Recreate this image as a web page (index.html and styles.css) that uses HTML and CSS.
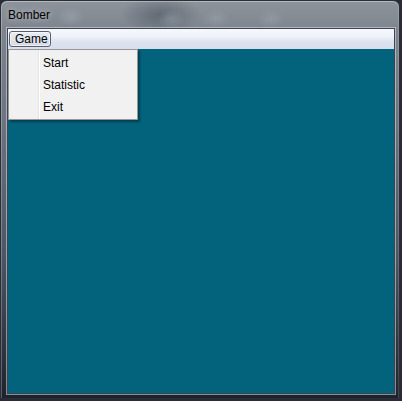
FILE: index.html
```html
<!DOCTYPE html>
<html>
<head>
<meta charset="utf-8">
<link rel="stylesheet" href="styles.css">
</head>
<body>
<div class="window">
  <div class="titlebar">
    <span class="title">Bomber</span>
  </div>
  <div class="client">
    <div class="menubar">
      <div class="menu-item active">Game</div>
    </div>
    <div class="canvas"></div>
    <div class="dropdown">
      <div class="dd-item">Start</div>
      <div class="dd-item">Statistic</div>
      <div class="dd-item">Exit</div>
    </div>
  </div>
</div>
</body>
</html>
```
FILE: styles.css
```css
html, body {
  margin: 0;
  padding: 0;
}
body {
  width: 402px;
  height: 401px;
  background: #2c2a36;
  font-family: "Liberation Sans", Arial, sans-serif;
  font-size: 12px;
  overflow: hidden;
}
.window {
  box-sizing: border-box;
  width: 400px;
  height: 399px;
  border: 1px solid #2a2f37;
  border-radius: 7px 7px 0 0;
  background:
    radial-gradient(ellipse 14px 10px at 70px 16px, rgba(170,180,195,0.35), transparent),
    radial-gradient(ellipse 14px 10px at 170px 18px, rgba(170,180,195,0.35), transparent),
    radial-gradient(ellipse 14px 10px at 215px 18px, rgba(170,180,195,0.3), transparent),
    radial-gradient(ellipse 14px 10px at 270px 18px, rgba(170,180,195,0.3), transparent),
    radial-gradient(ellipse 40px 20px at 160px 14px, rgba(30,40,55,0.35), transparent),
    linear-gradient(to bottom, #8d939b 0px, #7d848d 30px, #6c7480 120px, #4a5462 260px, #2a313c 360px, #1c222b 399px);
  box-shadow: inset 0 1px 0 rgba(255,255,255,0.35), inset 1px 0 0 rgba(255,255,255,0.25), inset -1px 0 0 rgba(255,255,255,0.15);
  display: flex;
  flex-direction: column;
  padding: 0 4px 4px 6px;
}
.titlebar {
  height: 27px;
  flex: none;
  display: flex;
  align-items: flex-start;
  padding-left: 1px;
}
.title {
  margin-top: 7px;
  color: #000;
  line-height: 14px;
  text-shadow: 0 0 6px rgba(255,255,255,0.6);
}
.client {
  position: relative;
  flex: 1;
  display: flex;
  flex-direction: column;
  border: 1px solid #3c4452;
  box-shadow: 0 0 0 1px rgba(220,226,235,0.55);
}
.menubar {
  height: 20px;
  flex: none;
  background: linear-gradient(to bottom, #f6f8fc 0%, #eef1f8 40%, #dde3f0 60%, #d9deee 100%);
  display: flex;
  align-items: flex-start;
  padding: 2px 0 0 1px;
  box-sizing: border-box;
}
.menu-item {
  height: 16px;
  line-height: 15px;
  padding: 0 6px;
  box-sizing: border-box;
  color: #000;
}
.menu-item.active {
  border: 1px solid #585e6c;
  border-radius: 3px;
  background: linear-gradient(to bottom, #e9ecf3 0%, #dfe3ec 50%, #d4d9e5 100%);
  box-shadow: inset 0 0 0 1px rgba(255,255,255,0.6);
  width: 42px;
  padding: 0 0 0 5px;
}
.canvas {
  flex: 1;
  background: #03637c;
}
.dropdown {
  position: absolute;
  left: 0;
  top: 20px;
  width: 130px;
  box-sizing: border-box;
  border: 1px solid #979797;
  background: linear-gradient(to right, #f1f1f1 0, #f1f1f1 29px, #e2e3e3 29px, #e2e3e3 30px, #ffffff 30px, #ffffff 31px, #f1f1f1 31px);
  box-shadow: 2px 2px 2px rgba(0,0,0,0.35);
  padding: 2px 0 1px 0;
}
.dd-item {
  height: 22px;
  line-height: 22px;
  padding-left: 34px;
  color: #000;
}
```
